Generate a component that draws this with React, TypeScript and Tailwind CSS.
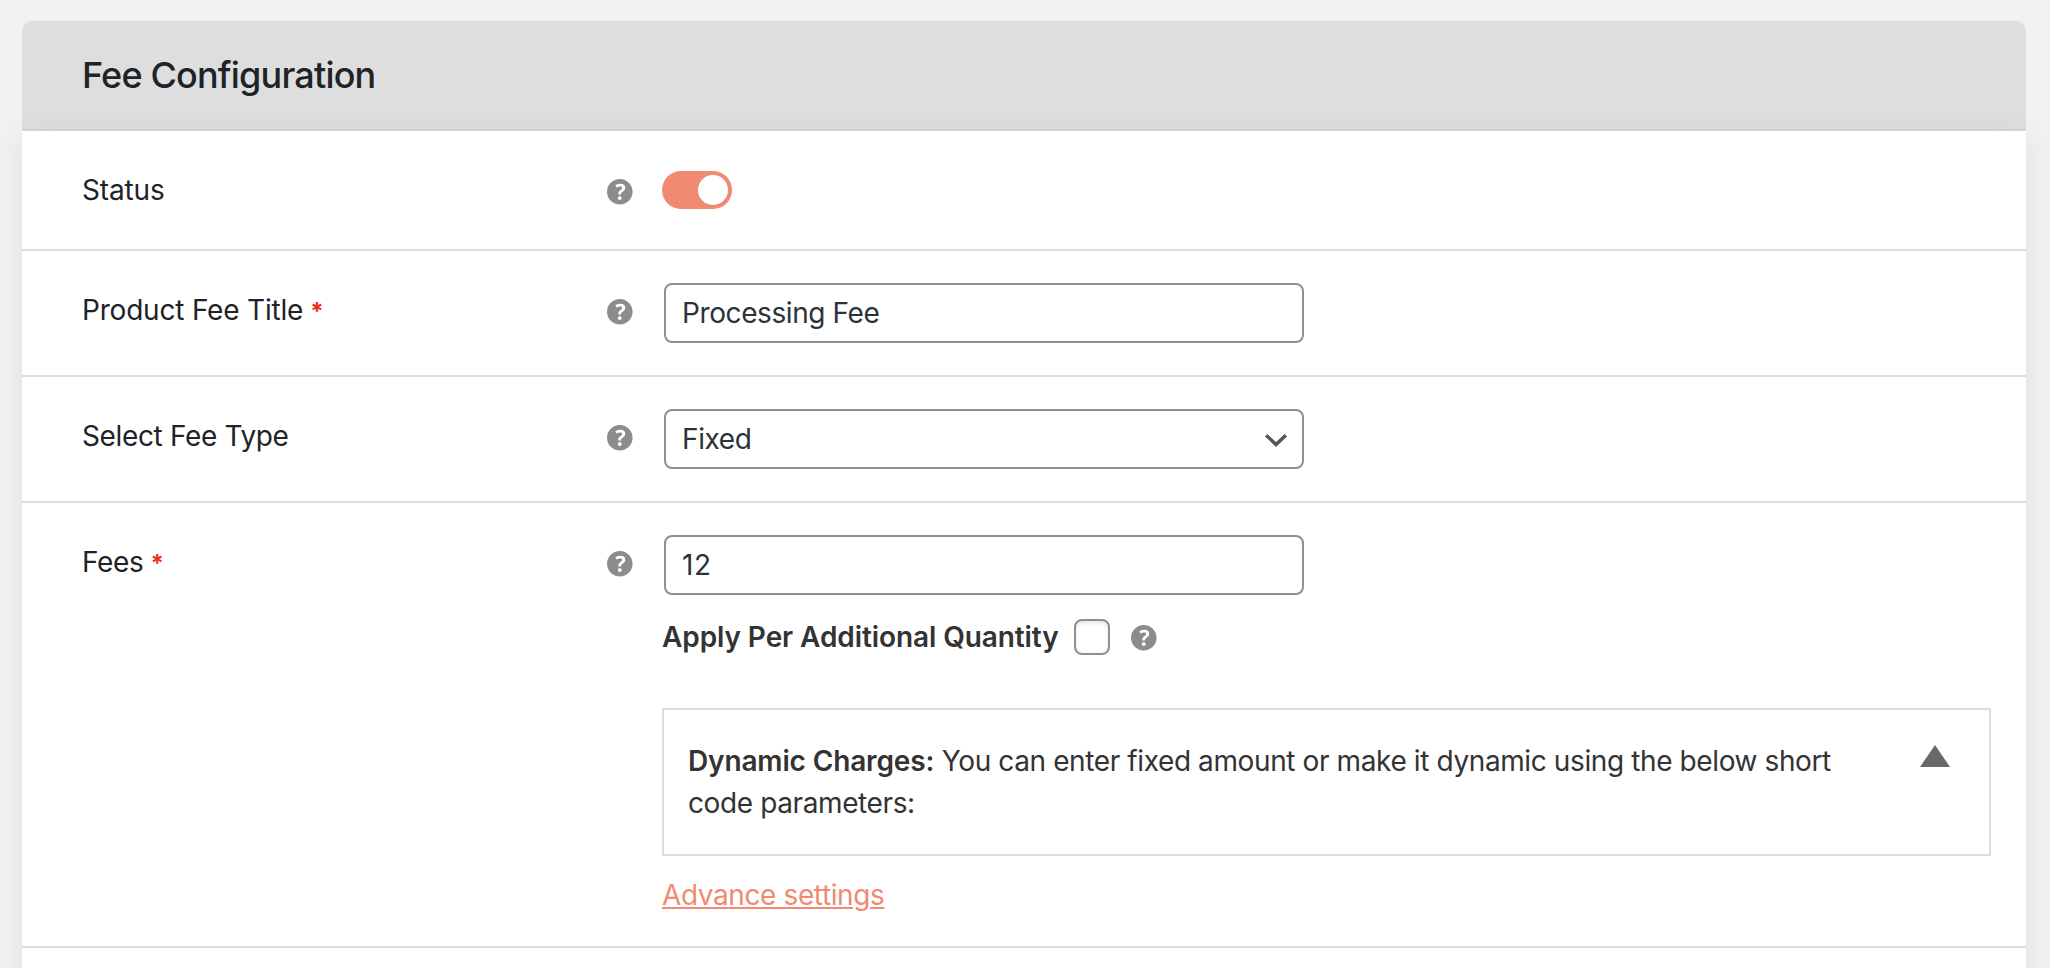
import type { ReactNode } from "react";

function HelpIcon() {
  return (
    <svg viewBox="3 3 14 14" className="size-[25.6px] shrink-0" fill="#8c8c8c" aria-hidden="true">
      <path d="M17 10c0-3.87-3.14-7-7-7-3.87 0-7 3.13-7 7s3.13 7 7 7c3.86 0 7-3.13 7-7zm-6.3 1.48H9.14v-.43c0-.38.08-.7.24-.98s.46-.57.88-.89c.41-.29.68-.53.81-.71.14-.18.2-.39.2-.62 0-.25-.09-.44-.28-.58-.19-.13-.45-.19-.79-.19-.58 0-1.25.19-2 .57l-.64-1.28c.87-.49 1.8-.74 2.77-.74.81 0 1.45.2 1.92.58.48.39.71.91.71 1.55 0 .43-.09.8-.29 1.11-.19.32-.57.67-1.11 1.06-.38.28-.61.49-.71.63-.1.15-.15.34-.15.57v.35zm-1.47 2.74c-.18-.17-.27-.42-.27-.73 0-.33.08-.58.26-.75s.43-.25.77-.25c.32 0 .57.09.75.26s.27.42.27.74c0 .3-.09.55-.27.72-.18.18-.43.27-.75.27-.33 0-.58-.09-.76-.27z" />
    </svg>
  );
}

type RowProps = {
  label: string;
  required?: boolean;
  height: string;
  tracking: string;
  children: ReactNode;
};

function Row({ label, required, height, tracking, children }: RowProps) {
  return (
    <div className={`flex items-start border-b-2 border-[#dcdcdc] pl-[60px] ${height}`}>
      <div className={`w-[525px] shrink-0 pt-[38px] leading-[42px] text-[#1d2327] ${tracking}`}>
        {label}
        {required && <span className="pl-[7px] text-[24px] font-bold text-[#f02a1d]">*</span>}
      </div>
      <div className="w-[55px] shrink-0 pt-12">
        <HelpIcon />
      </div>
      <div className="min-w-0 flex-1">{children}</div>
    </div>
  );
}

const field =
  "block h-[60px] w-[640px] appearance-none rounded-lg border-2 border-[#8c8f94] bg-white px-4 text-[#2c3338] outline-none";

export default function App() {
  return (
    <div className="h-[968px] overflow-hidden bg-[#f1f1f1] pt-[21px] pr-6 pl-[22px] font-['Inter',sans-serif] text-[28px]">
      <header className="h-[110px] rounded-t-[10px] bg-[#dedede] pl-[60px]">
        <h2 className="text-[36px] leading-[108px] font-medium tracking-[-0.82px] text-[#1d2327]">Fee Configuration</h2>
      </header>
      <main className="relative h-[900px] bg-white shadow-[0_-2px_0_rgba(0,0,0,0.03),0_8px_30px_rgba(0,0,0,0.08)]">
        <Row label="Status" height="h-[120px]" tracking="tracking-[-0.14px]">
          <div className="mt-10 flex h-[38px] w-[70px] items-center justify-end rounded-full bg-[#f08a73] pr-1">
            <span className="size-[30px] rounded-full bg-white" />
          </div>
        </Row>
        <Row label="Product Fee Title" required height="h-[126px]" tracking="tracking-[-0.2px]">
          <div className="pt-8 pl-0.5">
            <input className={`${field} tracking-[-0.4px]`} defaultValue="Processing Fee" />
          </div>
        </Row>
        <Row label="Select Fee Type" height="h-[126px]" tracking="tracking-[-0.36px]">
          <div className="relative mt-8 ml-0.5 w-[640px]">
            <select className={`${field} tracking-[-0.4px]`} defaultValue="Fixed">
              <option>Fixed</option>
            </select>
            <svg viewBox="0 0 22 13" className="pointer-events-none absolute top-[25px] right-[17px] h-[13px] w-[22px]" fill="none" stroke="#555" strokeWidth="3.4">
              <path d="M1.2 1.2 11 10.6l9.8-9.4" />
            </svg>
          </div>
        </Row>
        <Row label="Fees" required height="h-[445px]" tracking="tracking-[-0.36px]">
          <div className="pt-8 pl-0.5">
            <input className={`${field} tracking-[0.6px]`} defaultValue="12" />
          </div>
          <div className="mt-6 flex h-9 items-center">
            <span className="w-[412px] font-semibold tracking-[-0.09px] text-[#333]">Apply Per Additional Quantity</span>
            <input type="checkbox" className="size-9 appearance-none rounded-lg border-2 border-[#8c8f94] bg-white shadow-[inset_0_2px_4px_rgba(0,0,0,0.1)]" />
            <span className="flex pt-0.5 pl-[21px]">
              <HelpIcon />
            </span>
          </div>
          <div className="mt-[53px] flex h-[148px] w-[1329px] justify-between border-2 border-[#dcdcdc] pt-[30px] pr-[39px] pl-6 leading-[42px] text-[#333]">
            <p className="w-[1180px] tracking-[-0.39px]">
              <strong className="font-semibold tracking-[-0.14px]">Dynamic Charges:</strong> You can enter fixed amount or make it dynamic using the below short
              <br />
              code parameters:
            </p>
            <svg viewBox="0 0 30 22" className="mt-[5px] h-[22px] w-[30px]" fill="#686868">
              <path d="M15 0 30 22H0z" />
            </svg>
          </div>
          <a href="#" className="mt-[18px] block leading-[42px] tracking-[-0.39px] text-[#f08a73] underline decoration-2 underline-offset-[2px]">
            Advance settings
          </a>
        </Row>
      </main>
    </div>
  );
}
